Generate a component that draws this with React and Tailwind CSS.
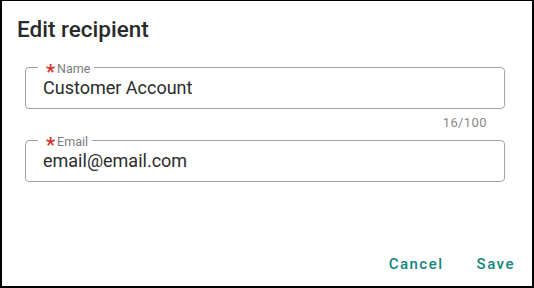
import { useState } from 'react';

function OutlinedField({ label, value, onChange }) {
  return (
    <fieldset className="m-0 w-[480px] rounded-[4px] border border-[#a3a3a3] px-[17px] pb-[8px] pt-0">
      <legend className="ml-[-5px] pl-[8px] pr-[4px] text-[12.5px] leading-[12px] text-[#7a7a7a]">
        <span className="relative top-[6px] mr-[2px] text-[20px] font-bold leading-[12px] text-[#d8312c]">*</span>
        {label}
      </legend>
      <input
        value={value}
        onChange={(e) => onChange(e.target.value)}
        className="mt-[1px] block h-[24px] w-full bg-transparent text-[18px] leading-[24px] text-[#2b2b2b] outline-none"
      />
    </fieldset>
  );
}

export default function App() {
  const [name, setName] = useState('Customer Account');
  const [email, setEmail] = useState('email@email.com');

  return (
    <div
      className="flex h-[288px] w-[534px] flex-col border-b-2 border-l-2 border-r-2 border-t border-black bg-white"
      style={{ fontFamily: 'Roboto, "Noto Sans", sans-serif' }}
    >
      <h1 className="ml-[15px] mt-[13px] text-[22.5px] font-medium leading-[30px] text-[#2a2a2a]">Edit recipient</h1>

      <div className="ml-[23px] mt-[16px]">
        <OutlinedField label="Name" value={name} onChange={setName} />
        <div className="mt-[6px] flex w-[480px] justify-end pr-[18px] text-[13px] leading-[16px] tracking-[0.4px] text-[#8a8a8a]">
          {name.length}/100
        </div>
        <div className="mt-[2px]">
          <OutlinedField label="Email" value={email} onChange={setEmail} />
        </div>
      </div>

      <div className="mt-auto flex justify-end gap-[17px] pb-[6px] pr-[9px]">
        <button type="button" className="px-2 py-1.5 text-[15px] font-medium leading-[20px] tracking-[1.5px] text-[#13857a]">
          Cancel
        </button>
        <button type="button" className="px-2 py-1.5 text-[15px] font-medium leading-[20px] tracking-[1.5px] text-[#13857a]">
          Save
        </button>
      </div>
    </div>
  );
}
